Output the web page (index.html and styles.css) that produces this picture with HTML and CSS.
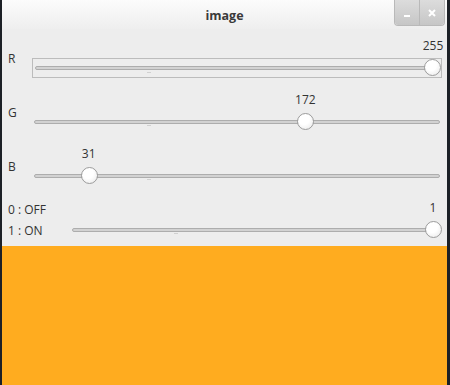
FILE: index.html
```html
<!DOCTYPE html>
<html lang="en">
<head>
<meta charset="utf-8">
<title>image</title>
<link rel="stylesheet" href="styles.css">
</head>
<body>
<div class="window">
  <div class="titlebar">
    <div></div>
    <div class="title">image</div>
    <div class="wm-buttons">
      <span class="wm-btn">
        <svg width="10" height="10" viewBox="0 0 10 10"><rect x="2" y="7" width="6" height="2" fill="#fff"/></svg>
      </span>
      <span class="wm-btn">
        <svg width="10" height="10" viewBox="0 0 10 10"><path d="M2 2 L8 8 M8 2 L2 8" stroke="#fff" stroke-width="2"/></svg>
      </span>
    </div>
  </div>

  <div class="controls">
    <div class="row">
      <div class="label">R</div>
      <div class="slider focused">
        <div class="value-line"><span class="value" style="left: calc(9px + (100% - 18px) * 1)">255</span></div>
        <div class="groove">
          <div class="track"></div>
          <div class="tick"></div>
          <div class="handle" style="left: calc(9px + (100% - 18px) * 1)"></div>
        </div>
      </div>
    </div>

    <div class="row">
      <div class="label">G</div>
      <div class="slider">
        <div class="value-line"><span class="value" style="left: calc(9px + (100% - 18px) * 0.6745)">172</span></div>
        <div class="groove">
          <div class="track"></div>
          <div class="tick"></div>
          <div class="handle" style="left: calc(9px + (100% - 18px) * 0.6745)"></div>
        </div>
      </div>
    </div>

    <div class="row">
      <div class="label">B</div>
      <div class="slider">
        <div class="value-line"><span class="value" style="left: calc(9px + (100% - 18px) * 0.1216)">31</span></div>
        <div class="groove">
          <div class="track"></div>
          <div class="tick"></div>
          <div class="handle" style="left: calc(9px + (100% - 18px) * 0.1216)"></div>
        </div>
      </div>
    </div>

    <div class="row">
      <div class="label switch-label">
        <span>0 : OFF</span>
        <span>1 : ON</span>
      </div>
      <div class="slider">
        <div class="value-line"><span class="value" style="left: calc(9px + (100% - 18px) * 1)">1</span></div>
        <div class="groove">
          <div class="track"></div>
          <div class="tick"></div>
          <div class="handle" style="left: calc(9px + (100% - 18px) * 1)"></div>
        </div>
      </div>
    </div>
  </div>

  <div class="preview" style="background-color: rgb(255, 172, 31)"></div>
</div>
</body>
</html>
```

FILE: styles.css
```css
html, body {
  margin: 0;
  padding: 0;
  height: 100%;
}

body {
  background-color: #1c2026;
  padding-left: 2px;
  font-family: "Open Sans", "DejaVu Sans", sans-serif;
  font-size: 12px;
  color: #333;
}

.window {
  width: 445px;
  height: 385px;
  background-color: #ededed;
  display: flex;
  flex-direction: column;
}

.titlebar {
  height: 29px;
  display: grid;
  grid-template-columns: 1fr auto 1fr;
  align-items: center;
  background: linear-gradient(#fcfcfc, #eeeeee);
}

.title {
  font-weight: bold;
  font-size: 12.5px;
  color: #3a3a3a;
  padding-top: 1px;
}

.wm-buttons {
  justify-self: end;
  align-self: start;
  display: flex;
  margin-right: 2px;
  height: 26px;
  border: 1px solid #b9b9b9;
  border-top: none;
  border-bottom-left-radius: 4px;
  border-bottom-right-radius: 4px;
  overflow: hidden;
  box-sizing: border-box;
}

.wm-btn {
  width: 24px;
  display: flex;
  align-items: center;
  justify-content: center;
  background: linear-gradient(#dcdcdc, #c6c6c6);
}

.wm-btn + .wm-btn {
  border-left: 1px solid #b9b9b9;
}

.controls {
  padding: 9px 5px 6px 6px;
  display: flex;
  flex-direction: column;
  gap: 14px;
}

.row {
  display: flex;
  height: 40px;
}

.label {
  width: 24px;
  align-self: center;
}

.switch-label {
  width: 62px;
  display: flex;
  flex-direction: column;
  line-height: 21px;
}

.slider {
  flex: 1;
  display: flex;
  flex-direction: column;
  gap: 4px;
}

.value-line {
  position: relative;
  height: 16px;
}

.value {
  position: absolute;
  top: 0;
  line-height: 16px;
  transform: translateX(-50%);
}

.groove {
  position: relative;
  height: 20px;
  box-sizing: border-box;
}

.slider.focused .groove {
  border: 1px solid #bcbcbc;
}

.track {
  position: absolute;
  left: 2px;
  right: 2px;
  top: 8px;
  height: 4px;
  box-sizing: border-box;
  border: 1px solid #adadad;
  background-color: #d2d2d2;
  border-radius: 2px;
}

.slider.focused .track {
  top: 7px;
}

.tick {
  position: absolute;
  left: 28%;
  top: 13px;
  width: 4px;
  height: 1px;
  background-color: #d0d0d0;
}

.handle {
  position: absolute;
  top: 1px;
  width: 17px;
  height: 17px;
  margin-left: -8px;
  box-sizing: border-box;
  border-radius: 50%;
  border: 1px solid #9c9c9c;
  background: radial-gradient(circle at 40% 35%, #ffffff 40%, #e6e6e6 100%);
}

.slider.focused .handle {
  top: 0;
}

.preview {
  flex: 1;
}
```
